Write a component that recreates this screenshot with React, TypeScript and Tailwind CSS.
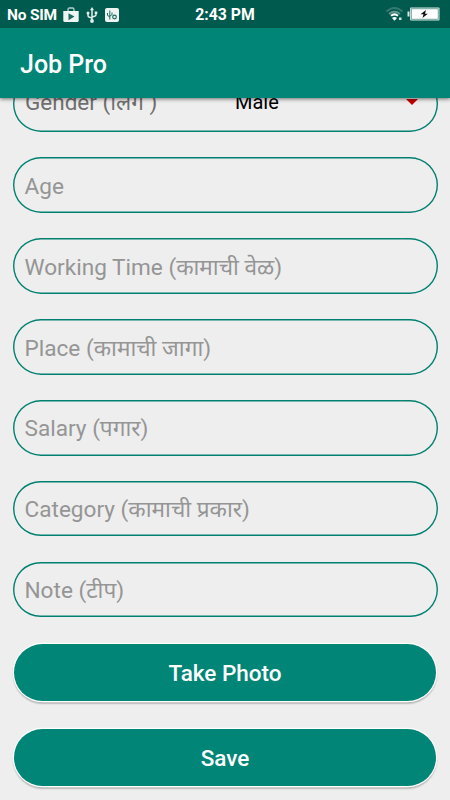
const FIELDS = [
  'Age',
  'Working Time (कामाची वेळ)',
  'Place (कामाची जागा)',
  'Salary (पगार)',
  'Category (कामाची प्रकार)',
  'Note (टीप)'
];

const BUTTONS = ['Take Photo', 'Save'];

function StatusBar() {
  return (
    <div className="h-7 bg-[#005a4d] grid grid-cols-3 items-center text-white text-[16px] leading-7 font-bold">
      <div className="flex items-center pl-[7px] pt-px">
        <span className="w-[50px] text-[15.5px] tracking-[-0.2px] whitespace-nowrap">No SIM</span>
        <svg className="w-4 h-4 ml-1.5" viewBox="0 0 16 16">
          <path d="M5 4.500V2.500Q5 1 6.500 1h3Q11 1 11 2.500V4.500" fill="none" stroke="#b5d0cb" strokeWidth="1.3" />
          <path d="M.3 4h15.400v9.500q0 1.500-1.500 1.500H1.800Q.3 15 .3 13.500z" fill="#eef5f3" />
          <path d="M5.500 6.200l6 3.400-6 3.600z" fill="#1d6b60" />
        </svg>
        <svg className="w-3 h-4 ml-[7px]" viewBox="0 0 12 16" fill="none" stroke="#e3efec" strokeWidth="1.5">
          <path d="M6 2.500v11M2 6v2.500q0 1.500 1.500 1.800L6 11M10 5.500v2Q10 9 8.500 9.300L6 10" />
          <path d="M6 0l2 3.200H4z" fill="#e3efec" stroke="none" />
          <circle cx="6" cy="14" r="1.900" fill="#e3efec" stroke="none" />
          <circle cx="2" cy="6" r="1.500" fill="#e3efec" stroke="none" />
          <path d="M8.700 4.500h2.600V7H8.700z" fill="#e3efec" stroke="none" />
        </svg>
        <svg className="w-3.5 h-3.5 ml-[7px]" viewBox="0 0 14 14" fill="none" stroke="#1d6b60">
          <rect width="14" height="14" rx="2" fill="#eef5f3" stroke="none" />
          <path d="M4.800 2.500v9M2.500 5v2q0 1 2.300 1.800M7 4.500v1.800q0 1-2.200 1.700" />
          <circle cx="9.500" cy="9" r="1.800" strokeWidth="1.200" />
        </svg>
      </div>
      <span className="text-center pt-px text-[15.800px]">2:43 PM</span>
      <div className="flex items-center justify-end pr-[10px] pb-px">
        <svg className="w-5 h-4" viewBox="0 0 20 16" fill="none">
          <path d="M1.500 5.500Q9.500-1.500 17.500 5.500" stroke="#34796f" strokeWidth="2" />
          <path d="M4 8q5.500-4.500 11 0" stroke="#63978f" strokeWidth="1.800" />
          <path d="M6 9.800q3.500-2.800 7 0" stroke="#fff" strokeWidth="2" />
          <path d="M7 12q2.500-2 5 0l-2.500 2.700z" fill="#fff" />
          <rect x="14" y="11.500" width="2.500" height="2.500" fill="#d3e3e0" />
        </svg>
        <svg className="w-[33px] h-3.5 ml-0.5" viewBox="0 0 33 14">
          <rect x=".5" y="4.500" width="2" height="5" fill="#d8e7e4" />
          <rect x="3" y=".5" width="29.500" height="13" rx="1" fill="#d8e7e4" />
          <rect x="4.200" y="1.800" width="27" height="10.400" fill="none" stroke="#4f8b82" strokeWidth=".7" />
          <rect x="5" y="2.500" width="25.500" height="9" fill="#fff" />
          <path d="M19 3l-5.500 4.300h3L15.500 11l5.300-4.300h-2.800z" fill="#111" />
        </svg>
      </div>
    </div>
  );
}

export default function App() {
  return (
    <div className="w-full h-[800px] overflow-hidden flex flex-col bg-[#eeeeee] font-[Roboto,'Noto_Sans_Devanagari','Noto_Sans',sans-serif]">
      <header className="relative z-10 shrink-0 shadow-[0_1px_4px_rgba(0,0,0,0.55)]">
        <StatusBar />
        <div className="h-[70px] bg-[#008577] flex items-center pl-5 pt-[3px]">
          <h1 className="text-[25px] font-medium text-white">Job Pro</h1>
        </div>
      </header>

      <main className="-mt-[21.800px] px-[12.500px] flex flex-col">
        {/* Gender */}
        <div className="h-[55.800px] shrink-0 rounded-full shadow-[inset_0_0_0_1.400px_#008070] flex items-center pl-[12.500px]">
          <span className="w-[210px] pb-1 text-[22.500px] leading-[30px] text-[#6f6f6f] whitespace-nowrap">Gender (लिंग )</span>
          <span className="pb-1 text-[20px] text-black">Male</span>
          <svg className="w-3 h-1.5 ml-auto mr-5 mb-[5px]" viewBox="0 0 12 6">
            <path d="M0 0h12L6 6z" fill="#c40000" />
          </svg>
        </div>

        {FIELDS.map((label) => (
          <div key={label} className="mt-[25.100px] h-[55.800px] shrink-0 rounded-full shadow-[inset_0_0_0_1.400px_#008070] flex items-center pl-3 pt-[3.500px]">
            <span className="text-[22.600px] leading-[30px] text-[#959595] whitespace-nowrap">{label}</span>
          </div>
        ))}

        <div className="mt-[27px] px-[1.700px] flex flex-col gap-7">
          {BUTTONS.map((label) => (
            <button key={label} className="h-[57px] pt-[2.500px] rounded-full bg-[#008577] text-white text-[22.500px] font-medium shadow-[0_0_0_1.300px_#fff,0_2px_1.500px_1px_rgba(0,0,0,0.22)]">
              {label}
            </button>
          ))}
        </div>
      </main>
    </div>
  );
}
